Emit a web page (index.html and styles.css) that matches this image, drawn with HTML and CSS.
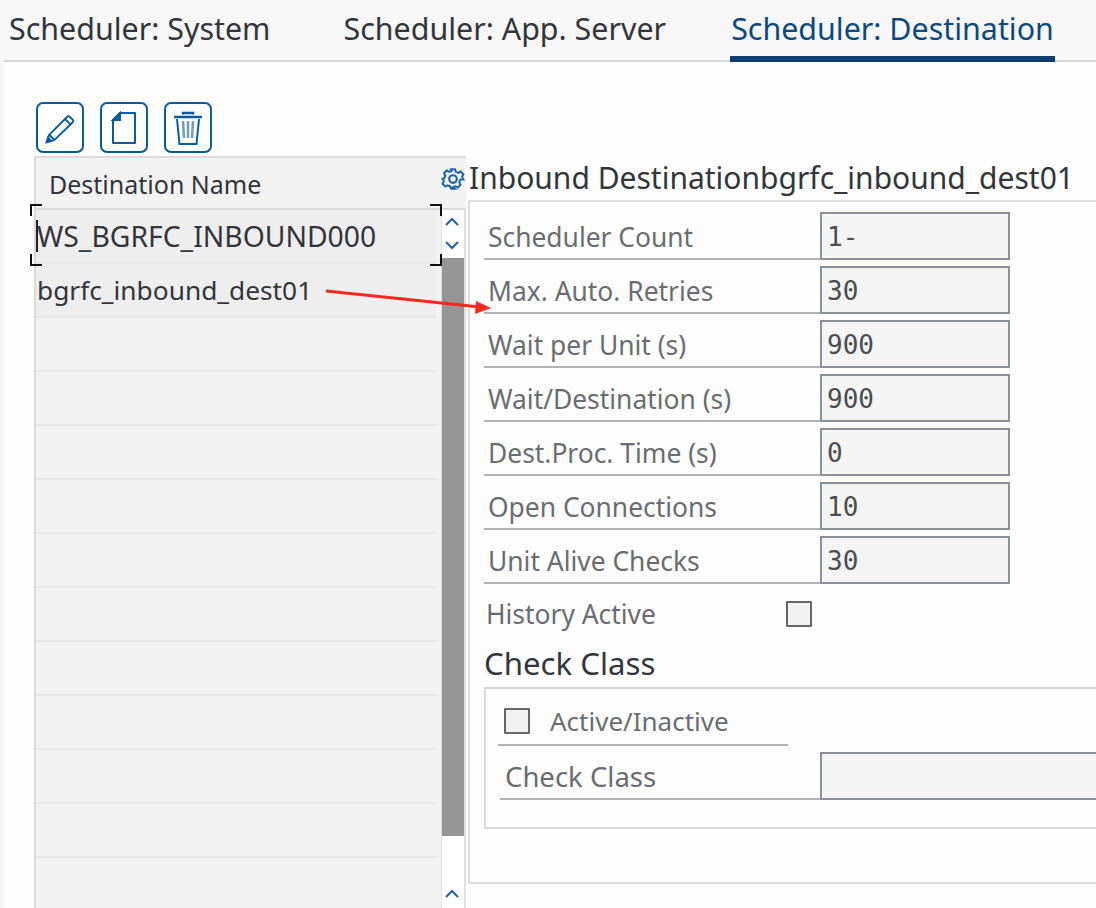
FILE: index.html
```html
<!DOCTYPE html>
<html lang="en">
<head>
  <meta charset="UTF-8">
  <title>Scheduler: Destination</title>
  <link rel="stylesheet" href="styles.css">
</head>
<body>
  <div class="page">
    <nav class="tabs">
      <a class="tab tab-system">Scheduler: System</a>
      <a class="tab tab-server">Scheduler: App. Server</a>
      <a class="tab tab-dest active">Scheduler: Destination</a>
    </nav>

    <main class="content">
      <div class="toolbar">
        <button class="tool-btn" type="button" aria-label="Edit">
          <svg width="32" height="34" viewBox="0 0 32 34" fill="none" stroke="#0a5a9e" stroke-width="1.800">
            <path d="M3 31l2-7L23 6c1-1 2-1 3 0l2.500 2.500c1 1 1 2 0 3L10.500 29z"/>
            <path d="M21 8l5.500 5.500M5.500 24l5 5"/>
            <path d="M2.500 31.500l1.500-5 3.500 3.500z" fill="#0a5a9e"/>
          </svg>
        </button>
        <button class="tool-btn" type="button" aria-label="New">
          <svg width="28" height="34" viewBox="0 0 28 34" fill="none" stroke="#0a5a9e" stroke-width="2">
            <path d="M10 2h15v30H3V9z" stroke-linejoin="round"/>
            <path d="M10 2v7H3z" fill="#0a5a9e"/>
          </svg>
        </button>
        <button class="tool-btn" type="button" aria-label="Delete">
          <svg width="30" height="36" viewBox="0 0 30 36" fill="none" stroke="#0a5a9e" stroke-width="2">
            <path d="M1 7h28" stroke-width="2.500"/>
            <path d="M10 4.500V3h10v1.500" stroke-width="2.500"/>
            <path d="M4 9l2.500 25h17L26 9"/>
            <path d="M10 11l1 17M15 11v17M20 11l-1 17" stroke="#6f9fc8" stroke-width="2.500"/>
          </svg>
        </button>
      </div>

      <div class="split">
        <section class="dest-table">
          <div class="dest-head">
            <span class="dest-title">Destination Name</span>
            <svg class="gear" width="26" height="26" viewBox="0 0 24 24" fill="none" stroke="#1f63ad" stroke-width="2">
              <circle cx="12" cy="12" r="3.500"/>
              <path d="M10 2h4l.8 2.700 2.400 1 2.500-1.300 2.800 2.800-1.300 2.500 1 2.400L22 12v0l-2.700.9-1 2.400 1.300 2.500-2.800 2.800-2.500-1.300-2.400 1L14 22h-4l-.9-2.700-2.400-1-2.500 1.300-2.800-2.800 1.300-2.500-1-2.400L.5 12l2.700-.9 1-2.400L2.900 6.200l2.800-2.800 2.500 1.300 2.400-1z" transform="translate(1.100 1.100) scale(.91)"/>
            </svg>
          </div>
          <div class="dest-body">
            <ul class="dest-rows">
              <li class="dest-row filled caps">WS_BGRFC_INBOUND000</li>
              <li class="dest-row filled">bgrfc_inbound_dest01</li>
              <li class="dest-row"></li>
              <li class="dest-row"></li>
              <li class="dest-row"></li>
              <li class="dest-row"></li>
              <li class="dest-row"></li>
              <li class="dest-row"></li>
              <li class="dest-row"></li>
              <li class="dest-row"></li>
              <li class="dest-row"></li>
              <li class="dest-row"></li>
              <li class="dest-row"></li>
            </ul>
            <div class="scroll">
              <div class="scroll-arrows">
                <svg width="16" height="12" viewBox="0 0 16 12" fill="none" stroke="#1f5fae" stroke-width="2"><path d="M2 9l6-6 6 6"/></svg>
                <svg width="16" height="12" viewBox="0 0 16 12" fill="none" stroke="#1f5fae" stroke-width="2"><path d="M2 3l6 6 6-6"/></svg>
              </div>
              <div class="scroll-thumb"></div>
              <div class="scroll-rest">
                <svg width="16" height="12" viewBox="0 0 16 12" fill="none" stroke="#1f5fae" stroke-width="2"><path d="M2 9l6-6 6 6"/></svg>
              </div>
            </div>
          </div>
        </section>

        <section class="detail">
          <h2 class="detail-title">Inbound Destinationbgrfc_inbound_dest01</h2>
          <div class="panel">
            <div class="field"><label class="field-label">Scheduler Count</label><div class="field-input">1-</div></div>
            <div class="field"><label class="field-label">Max. Auto. Retries</label><div class="field-input">30</div></div>
            <div class="field"><label class="field-label">Wait per Unit (s)</label><div class="field-input">900</div></div>
            <div class="field"><label class="field-label">Wait/Destination (s)</label><div class="field-input">900</div></div>
            <div class="field"><label class="field-label">Dest.Proc. Time (s)</label><div class="field-input">0</div></div>
            <div class="field"><label class="field-label">Open Connections</label><div class="field-input">10</div></div>
            <div class="field"><label class="field-label">Unit Alive Checks</label><div class="field-input">30</div></div>

            <div class="history">
              <span class="history-label">History Active</span>
              <span class="checkbox"></span>
            </div>

            <h3 class="group-title">Check Class</h3>
            <div class="group">
              <div class="active-row">
                <span class="checkbox"></span>
                <span class="active-label">Active/Inactive</span>
              </div>
              <div class="field check-field">
                <label class="field-label">Check Class</label>
                <div class="field-input wide"></div>
              </div>
            </div>
          </div>
        </section>
      </div>
    </main>

    <!-- focus marker and annotation sit on top of the screen -->
    <div class="focus">
      <i class="corner tl"></i><i class="corner tr"></i><i class="corner bl"></i><i class="corner br"></i>
      <i class="caret"></i>
    </div>
    <svg class="annotation" width="180" height="30" viewBox="0 0 180 30">
      <path d="M1 2L155 18" stroke="#f5291c" stroke-width="3" fill="none"/>
      <path d="M166 19L151 12L150 25z" fill="#f5291c"/>
    </svg>
  </div>
</body>
</html>
```

FILE: styles.css
```css
* {
  box-sizing: border-box;
}

body {
  margin: 0;
  font-family: "Noto Sans", Arial, sans-serif;
  color: #32363a;
  background-color: #f7f7f7;
}

.page {
  position: relative;
  width: 1096px;
  height: 908px;
  overflow: hidden;
}

/* tabs */
.tabs {
  display: flex;
  height: 62px;
  margin-left: 4px;
  border-bottom: 2px solid #d9d9d9;
}

.tab {
  height: 60px;
  padding-top: 9px;
  font-size: 30.400px;
  line-height: 40px;
  white-space: nowrap;
}

.tab-system {
  margin-left: 5px;
  margin-right: 73px;
}

.tab-server {
  margin-right: 64px;
}

.tab.active {
  height: 62px;
  padding-left: 1px;
  padding-right: 1px;
  color: #0a4a80;
  border-bottom: 6px solid #0a3f70;
}

.content {
  margin-left: 4px;
  height: 846px;
  padding: 40px 0 0 30px;
  background-color: #fdfdfd;
}

/* toolbar */
.toolbar {
  display: flex;
  gap: 16px;
  height: 54px;
  padding-left: 2px;
}

.tool-btn {
  display: flex;
  align-items: center;
  justify-content: center;
  width: 48px;
  height: 51px;
  padding: 0;
  background: #fff;
  border: 2px solid #0a5a9e;
  border-radius: 7px;
}

.split {
  display: flex;
}

/* destination table */
.dest-table {
  flex: none;
  width: 432px;
  border-left: 2px solid #d9d9d9;
}

.dest-head {
  position: relative;
  height: 54px;
  padding: 7px 0 0 13px;
  background-color: #f2f2f2;
  border-top: 2px solid #dcdcdc;
  border-bottom: 2px solid #dcdcdc;
}

.dest-title {
  font-size: 25px;
  line-height: 38px;
}

.gear {
  position: absolute;
  right: 0;
  top: 8px;
  background: #f2f2f2;
}

.dest-body {
  display: flex;
  height: 700px;
}

.dest-rows {
  flex: none;
  width: 400px;
  margin: 0;
  padding: 0;
  list-style: none;
}

.dest-row {
  height: 54px;
  padding: 7px 0 0 1px;
  font-size: 26.300px;
  line-height: 38px;
  background-color: #f2f2f2;
  border-bottom: 2px solid #e6e6e6;
}

.dest-row.filled {
  background-color: #eeeeee;
}

.dest-row.caps {
  font-size: 28.300px;
}

.scroll {
  display: flex;
  flex-direction: column;
  width: 30px;
  padding-left: 5px;
  background-color: #f2f2f2;
}

.scroll-arrows,
.scroll-thumb,
.scroll-rest {
  width: 25px;
  background: #fff;
  border-left: 1px solid #e0e0e0;
  border-right: 2px solid #e0e0e0;
}

.scroll-arrows {
  display: flex;
  flex-direction: column;
  align-items: center;
  gap: 11px;
  height: 48px;
  padding: 6px 2px 0 0;
}

.scroll-thumb {
  height: 578px;
  background: #959595;
}

.scroll-rest {
  flex: 1;
  display: flex;
  justify-content: center;
  padding: 52px 2px 0 0;
}

/* right side */
.detail {
  flex: none;
  width: 700px;
  margin-left: 2px;
}

.detail-title {
  height: 44px;
  margin: 0;
  padding: 1px 0 0 1px;
  font-size: 30px;
  font-weight: 400;
  line-height: 42px;
}

.panel {
  height: 684px;
  padding: 10px 0 0 14px;
  background-color: #fdfdfd;
  border: 2px solid #dedede;
}

.field {
  display: flex;
  height: 48px;
  margin-bottom: 6px;
}

.field-label {
  flex: none;
  width: 336px;
  padding: 6px 0 0 4px;
  font-size: 26.400px;
  line-height: 38px;
  color: #6a6d70;
  border-bottom: 2px solid #b3b3b3;
}

.field-input {
  width: 190px;
  padding-left: 5px;
  font-family: "DejaVu Sans Mono", monospace;
  font-size: 26px;
  line-height: 46px;
  color: #4a4d50;
  background-color: #f4f4f4;
  border: 2px solid #89919a;
}

.field-input.wide {
  width: 400px;
}

.history {
  display: flex;
  align-items: center;
  height: 48px;
  margin-bottom: 2px;
  padding-left: 2px;
  font-size: 26.400px;
  color: #6a6d70;
}

.history-label {
  width: 300px;
}

.checkbox {
  display: block;
  width: 26px;
  height: 26px;
  background-color: #f2f2f2;
  border: 2px solid #666;
  border-radius: 1px;
}

.group-title {
  height: 47px;
  margin: 0;
  font-size: 31.200px;
  font-weight: 400;
  line-height: 46px;
}

.group {
  height: 142px;
  padding: 9px 0 0 12px;
  border: 2px solid #d9d9d9;
}

.active-row {
  display: flex;
  align-items: center;
  width: 290px;
  height: 48px;
  margin-bottom: 6px;
  padding-left: 6px;
  font-size: 26px;
  color: #6a6d70;
  border-bottom: 2px solid #b3b3b3;
}

.active-label {
  margin-left: 20px;
}

.check-field {
  margin-left: 2px;
}

.check-field .field-label {
  width: 320px;
  padding-left: 5px;
  font-size: 27.500px;
}

/* focus marker */
.focus {
  position: absolute;
  left: 30px;
  top: 204px;
  width: 412px;
  height: 62px;
}

.corner {
  position: absolute;
  width: 12px;
  height: 12px;
  border: 0 solid #111;
}

.tl { left: 0; top: 0; border-width: 2px 0 0 2px; }
.tr { right: 0; top: 0; border-width: 2px 2px 0 0; }
.bl { left: 0; bottom: 0; border-width: 0 0 2px 2px; }
.br { right: 0; bottom: 0; border-width: 0 2px 2px 0; }

.caret {
  position: absolute;
  left: 6px;
  top: 16px;
  width: 2px;
  height: 32px;
  background: #222;
}

.annotation {
  position: absolute;
  left: 325px;
  top: 289px;
}
```
